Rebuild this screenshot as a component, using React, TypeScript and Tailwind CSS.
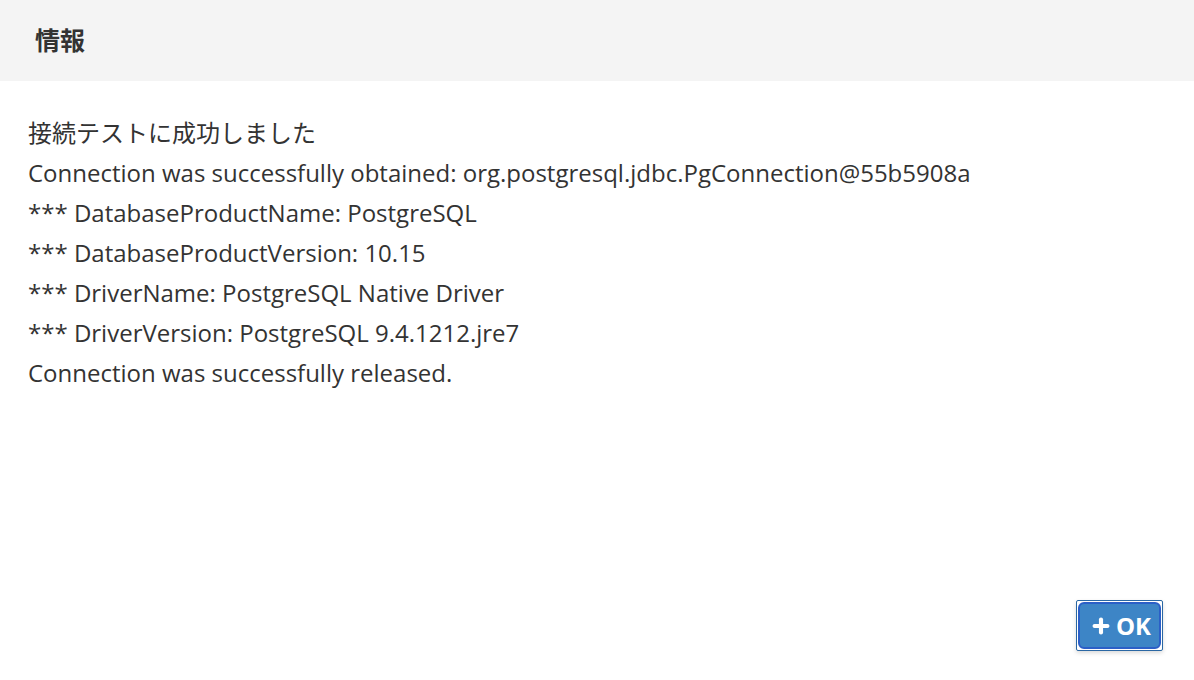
import { Plus } from "lucide-react";

const lines = [
  "接続テストに成功しました",
  "Connection was successfully obtained: org.postgresql.jdbc.PgConnection@55b5908a",
  "*** DatabaseProductName: PostgreSQL",
  "*** DatabaseProductVersion: 10.15",
  "*** DriverName: PostgreSQL Native Driver",
  "*** DriverVersion: PostgreSQL 9.4.1212.jre7",
  "Connection was successfully released.",
];

export default function App() {
  return (
    <div
      className="w-[1194px] h-[680px] bg-white flex flex-col text-[#333333]"
      style={{ fontFamily: '"Open Sans", "Noto Sans CJK JP", sans-serif' }}
    >
      <div className="h-[81px] bg-[#f4f4f4] flex items-center px-[35px] shrink-0">
        <h1 className="text-[25px] font-bold text-[#333333]">情報</h1>
      </div>

      <div className="flex-1 pt-[32px] px-[28px]">
        {lines.map((line) => (
          <p key={line} className="text-[24px] leading-[40px]">
            {line}
          </p>
        ))}
      </div>

      <div className="flex justify-end pr-[31px] pb-[29px]">
        <button className="rounded-[2px] border border-[#2a67a3] p-[1px] bg-white shadow-[0_2px_4px_rgba(0,0,0,0.15)]">
          <span className="flex items-center gap-[4px] h-[47px] pl-[10px] pr-[8px] rounded-[6px] border-2 border-[#2b5fc7] bg-[#3d85c6] text-white text-[24px] font-bold">
            <Plus size={22} strokeWidth={4.5} />
            OK
          </span>
        </button>
      </div>
    </div>
  );
}
